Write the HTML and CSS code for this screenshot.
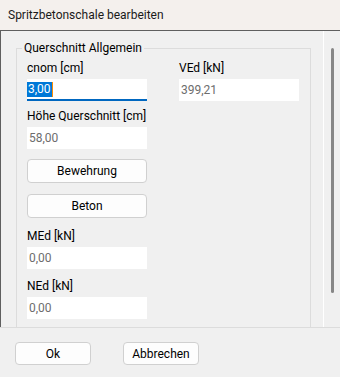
FILE: index.html
```html
<!DOCTYPE html>
<html lang="de">
<head>
    <meta charset="UTF-8">
    <meta name="viewport" content="width=device-width, initial-scale=1.0">
    <title>Spritzbetonschale bearbeiten</title>
    <link rel="stylesheet" href="styles.css">
</head>
<body>
    <div class="titlebar">Spritzbetonschale bearbeiten</div>

    <div class="main">
        <div class="panel">
            <fieldset class="group">
                <legend>Querschnitt Allgemein</legend>
                <div class="columns">
                    <div class="col">
                        <div class="field">
                            <label>cnom [cm]</label>
                            <div class="textbox focused"><span class="sel">3,00</span></div>
                        </div>
                        <div class="field">
                            <label>Höhe Querschnitt [cm]</label>
                            <div class="textbox">58,00</div>
                        </div>
                        <button class="btn first">Bewehrung</button>
                        <button class="btn">Beton</button>
                        <div class="field spaced">
                            <label>MEd [kN]</label>
                            <div class="textbox">0,00</div>
                        </div>
                        <div class="field wide">
                            <label>NEd [kN]</label>
                            <div class="textbox">0,00</div>
                        </div>
                    </div>
                    <div class="col">
                        <div class="field">
                            <label>VEd [kN]</label>
                            <div class="textbox">399,21</div>
                        </div>
                    </div>
                </div>
            </fieldset>
        </div>
        <div class="scrollbar">
            <div class="thumb"></div>
        </div>
    </div>

    <div class="footer">
        <button class="dlg-btn">Ok</button>
        <button class="dlg-btn">Abbrechen</button>
    </div>
</body>
</html>
```

FILE: styles.css
```css
body {
    font-family: Roboto, "Liberation Sans", sans-serif;
    font-size: 12px;
    margin: 0;
    width: 340px;
    height: 377px;
    overflow: hidden;
    background-color: #f0f0f0;
    color: #000;
}

.titlebar {
    height: 30px;
    line-height: 30px;
    padding-left: 8px;
    background: #f4f0ed;
    color: #1a1a1a;
}

.main {
    display: flex;
    height: 298px;
    box-sizing: border-box;
    border-top: 1px solid #5f5f5f;
    border-bottom: 1px solid #dcdcdc;
}

.panel {
    flex: none;
    width: 324px;
    box-sizing: border-box;
    border-left: 1px solid #5f5f5f;
    border-right: 1px solid #ffffff;
    overflow: hidden;
}

.group {
    margin: 9px 12px 0 15px;
    padding: 4px 10px 0;
    min-height: 330px;
    border: 1px solid #dcdcdc;
}

.group legend {
    padding: 0 2px;
    margin-left: -5px;
    line-height: 16px;
}

.columns {
    display: grid;
    grid-template-columns: 120px 120px;
    column-gap: 32px;
}

.col {
    display: flex;
    flex-direction: column;
}

.field {
    display: flex;
    flex-direction: column;
    gap: 3px;
}

.field + .field {
    margin-top: 7px;
}

.field.spaced {
    margin-top: 10px;
}

.field.wide {
    margin-top: 9px;
}

.field label {
    line-height: 16px;
    white-space: nowrap;
}

.textbox {
    height: 22px;
    box-sizing: border-box;
    padding: 0 2px;
    line-height: 22px;
    background: #ffffff;
    color: #6d6d6d;
}

.textbox.focused {
    border-bottom: 2px solid #0067c0;
    line-height: 20px;
    padding-left: 0;
}

.sel {
    display: inline-block;
    line-height: 15px;
    padding: 0 1px;
    background: #0078d7;
    color: #ffffff;
    border-right: 1px solid #ff8c00;
}

.btn {
    height: 24px;
    margin-top: 11px;
    padding: 0;
    font: inherit;
    color: #000;
    background: #fdfdfd;
    border: 1px solid #d0d0d0;
    border-radius: 4px;
}

.btn.first {
    margin-top: 10px;
}

.scrollbar {
    flex: 1;
    padding-top: 17px;
}

.thumb {
    width: 3px;
    height: 245px;
    margin-left: 7px;
    background: #878787;
    border-radius: 2px;
}

.footer {
    display: flex;
    gap: 32px;
    padding: 14px 0 0 15px;
}

.dlg-btn {
    width: 76px;
    height: 23px;
    padding: 0;
    font: inherit;
    color: #000;
    background: #fdfdfd;
    border: 1px solid #d0d0d0;
    border-radius: 4px;
}
```
